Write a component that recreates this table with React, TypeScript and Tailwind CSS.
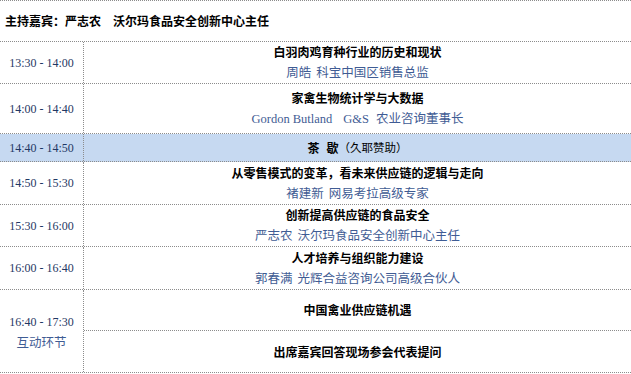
import React from 'react';

const cnTime = "font-['Liberation_Serif','Noto_Sans_CJK_SC',serif] text-[12px] leading-[14px] text-[#1f3864]";
const cnTitle = "font-['Noto_Sans_CJK_SC',sans-serif] font-bold text-[12px] leading-[14px] text-black";
const cnSpeaker = "font-['Liberation_Serif','Noto_Sans_CJK_SC',serif] text-[12.5px] leading-[14px] text-[#3f5c94]";
const cnLine = 'border-b border-dotted border-[#8c8c8c]';

interface SessionProps {
    time: string;
    title: string;
    name: string;
    role: string;
    height: string;
}

function Session({time, title, name, role, height}: SessionProps) {
    return (
        <div className={`flex ${height} ${cnLine}`}>
            <div className="w-[84px] shrink-0 flex items-center justify-center border-r border-dotted border-[#8c8c8c]">
                <span className={cnTime}>{time}</span>
            </div>
            <div className="flex-1 flex flex-col items-center justify-center gap-[7px]">
                <div className={cnTitle}>{title}</div>
                <div className={cnSpeaker}>{name}<span className="ml-[5px]">{role}</span></div>
            </div>
        </div>
    )
}

function App() {
    return (
        <div className="w-[631px] h-[374px] bg-white overflow-hidden">
            {/* host line */}
            <div className={`h-[42px] flex items-center pl-[5px] border-t ${cnLine}`}>
                <span className="font-['Noto_Sans_CJK_SC',sans-serif] font-bold text-[12px] leading-[14px] text-black">
                    主持嘉宾：严志农<span className="ml-[12px]">沃尔玛食品安全创新中心主任</span>
                </span>
            </div>

            <Session height="h-[42px]" time="13:30 - 14:00" title="白羽肉鸡育种行业的历史和现状" name="周皓" role="科宝中国区销售总监" />

            <div className={`flex h-[50px] ${cnLine}`}>
                <div className="w-[84px] shrink-0 flex items-center justify-center border-r border-dotted border-[#8c8c8c]">
                    <span className={cnTime}>14:00 - 14:40</span>
                </div>
                <div className="flex-1 flex flex-col items-center justify-center gap-[7px]">
                    <div className={cnTitle}>家禽生物统计学与大数据</div>
                    <div className={cnSpeaker}>Gordon Butland<span className="ml-[11px]">G&amp;S</span><span className="ml-[7px]">农业咨询董事长</span></div>
                </div>
            </div>

            {/* tea break */}
            <div className={`flex h-[28px] bg-[#c6d9f1] ${cnLine}`}>
                <div className="w-[84px] shrink-0 flex items-center justify-center border-r border-dotted border-[#8c8c8c]">
                    <span className={cnTime}>14:40 - 14:50</span>
                </div>
                <div className="flex-1 flex items-center justify-center">
                    <span className={cnTitle}>茶</span>
                    <span className={`${cnTitle} ml-[7px]`}>歇</span>
                    <span className="font-['Liberation_Serif','Noto_Sans_CJK_SC',serif] text-[11.5px] leading-[14px] text-black">（久耶赞助）</span>
                </div>
            </div>

            <Session height="h-[43px]" time="14:50 - 15:30" title="从零售模式的变革，看未来供应链的逻辑与走向" name="褚建新" role="网易考拉高级专家" />
            <Session height="h-[42px]" time="15:30 - 16:00" title="创新提高供应链的食品安全" name="严志农" role="沃尔玛食品安全创新中心主任" />
            <Session height="h-[43px]" time="16:00 - 16:40" title="人才培养与组织能力建设" name="郭春满" role="光辉合益咨询公司高级合伙人" />

            {/* interactive */}
            <div className={`flex h-[83px] ${cnLine}`}>
                <div className="w-[84px] shrink-0 flex flex-col items-center justify-center gap-[7px] pt-[2px] border-r border-dotted border-[#8c8c8c]">
                    <span className={cnTime}>16:40 - 17:30</span>
                    <span className={cnSpeaker}>互动环节</span>
                </div>
                <div className="flex-1 flex flex-col">
                    <div className={`h-[41px] flex items-center justify-center ${cnLine}`}>
                        <span className={cnTitle}>中国禽业供应链机遇</span>
                    </div>
                    <div className="flex-1 flex items-center justify-center">
                        <span className={cnTitle}>出席嘉宾回答现场参会代表提问</span>
                    </div>
                </div>
            </div>
        </div>
    );
}

export default App;
